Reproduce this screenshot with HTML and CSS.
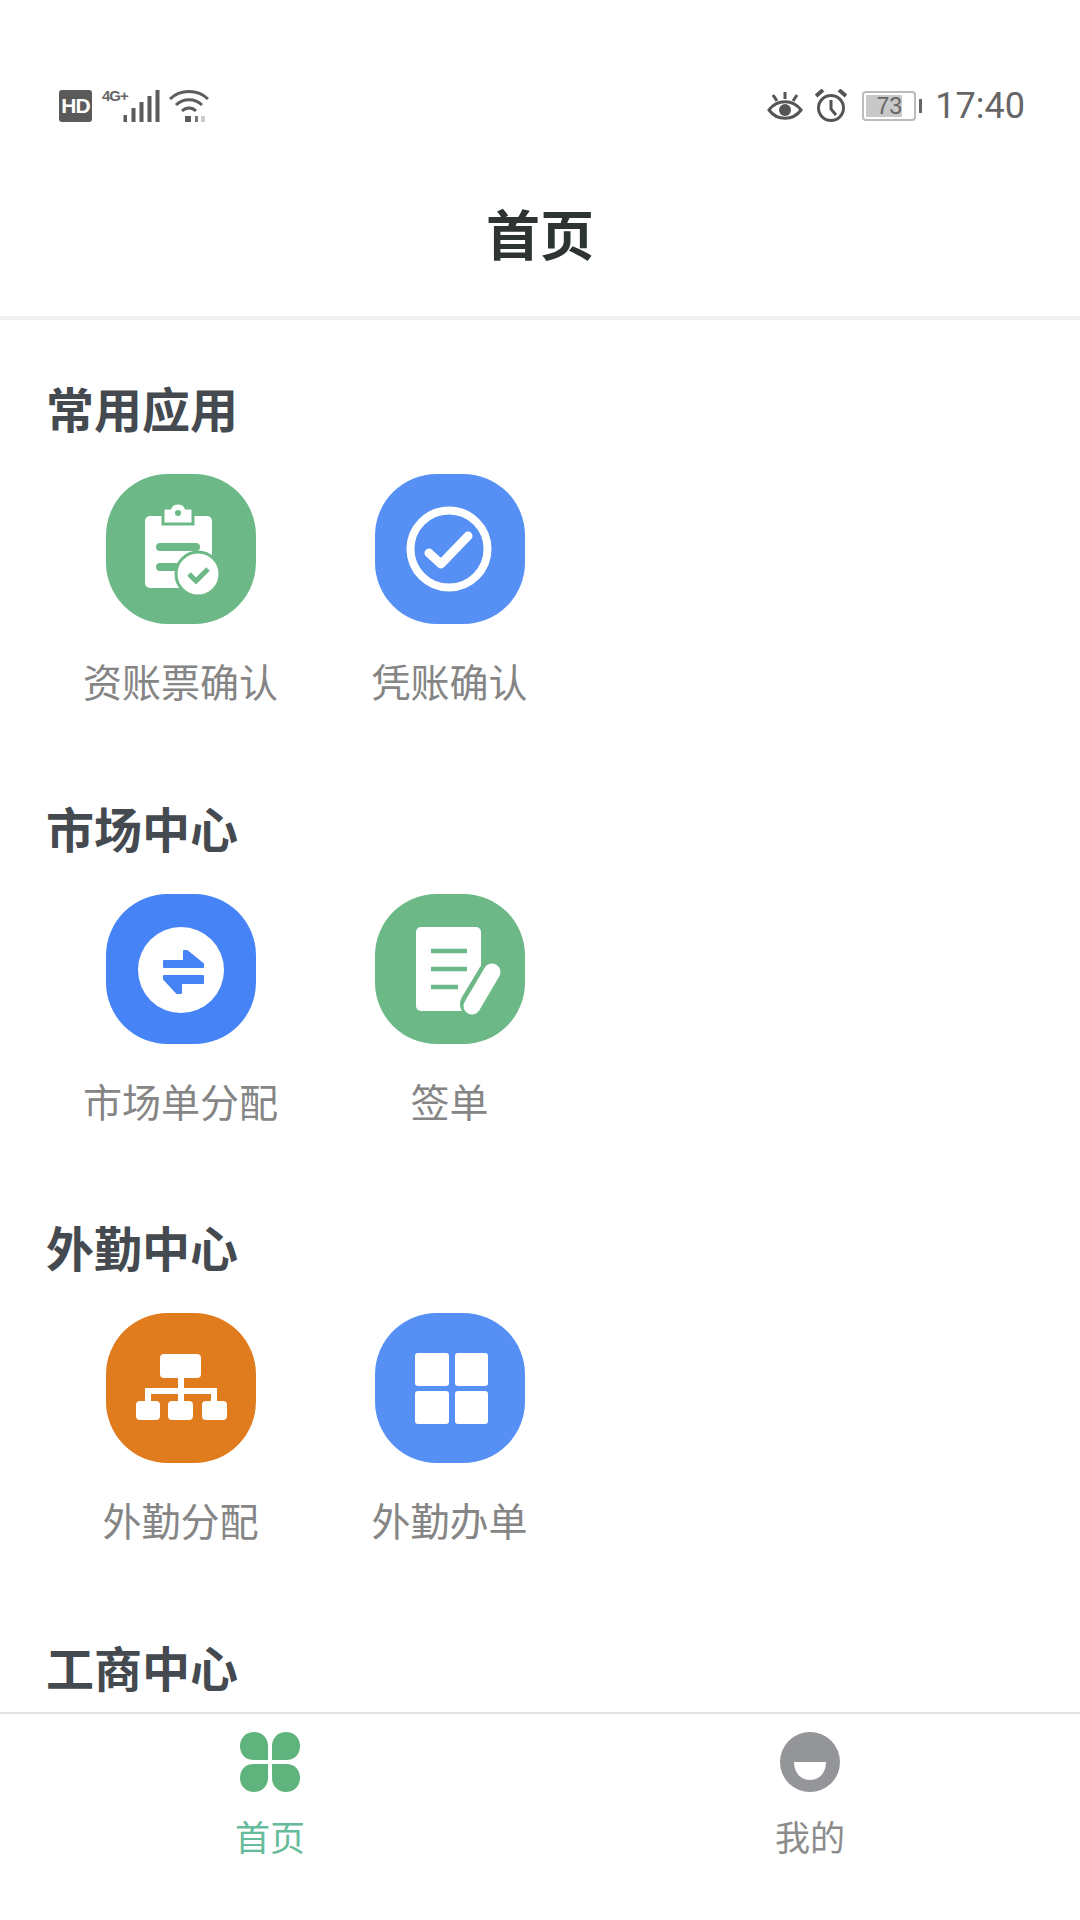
FILE: index.html
```html
<!DOCTYPE html>
<html lang="zh-CN">

<head>
    <meta charset="UTF-8" />
    <title>首页</title>
    <link rel="stylesheet" href="styles.css">
</head>

<body>

    <div class="app">

        <!-- Status bar -->
        <div class="status-bar">
            <div class="status-left">
                <span class="hd-badge">HD</span>
                <span class="net-type">4G+</span>
                <svg class="signal-icon" viewBox="0 0 36 32">
                    <rect x="0" y="25" width="3.5" height="7" />
                    <rect x="8" y="18" width="4" height="14" />
                    <rect x="16" y="12" width="4" height="20" />
                    <rect x="24" y="6" width="4" height="26" />
                    <rect x="32" y="0" width="4" height="32" />
                </svg>
                <svg class="wifi-icon" viewBox="0 0 40 32">
                    <g fill="none" stroke="#5c5c5c" stroke-width="3">
                        <path d="M1 9 C11 -1 29 -1 39 9" />
                        <path d="M7 15 C14 8 26 8 33 15" />
                        <path d="M13 21 C17 17 23 17 27 21" />
                    </g>
                    <rect x="16" y="26" width="6" height="6" fill="#5c5c5c" />
                    <rect x="26" y="26" width="3" height="6" fill="#777" />
                    <rect x="32" y="26" width="4" height="6" fill="#ccc" />
                </svg>
            </div>
            <div class="status-right">
                <svg class="eye-icon" viewBox="0 0 36 32">
                    <g fill="none" stroke="#555" stroke-width="3">
                        <path d="M2 20 C10 9 26 9 34 20 C26 31 10 31 2 20 Z" />
                        <path d="M18 2 V9 M6 5 L10 11 M30 5 L26 11" />
                    </g>
                    <circle cx="18" cy="20" r="6" fill="#555" />
                </svg>
                <svg class="alarm-icon" viewBox="0 0 32 34">
                    <g fill="none" stroke="#555" stroke-width="3">
                        <circle cx="16" cy="19" r="12.5" />
                        <path d="M16 11 V20 L21 26" />
                        <path d="M1 7 L8 1 M31 7 L24 1" stroke-width="4" />
                    </g>
                </svg>
                <div class="battery">
                    <div class="battery-body">
                        <div class="battery-level"></div>
                        <span class="battery-text">73</span>
                    </div>
                    <div class="battery-nub"></div>
                </div>
                <span class="status-time">17:40</span>
            </div>
        </div>

        <!-- Title -->
        <div class="page-header">首页</div>

        <!-- App groups -->
        <div class="content">

            <div class="group">
                <h2 class="group-title">常用应用</h2>
                <div class="app-row">
                    <div class="app-item">
                        <svg class="app-icon icon-green" viewBox="0 0 150 150">
                            <rect x="39" y="42" width="67" height="72" rx="5" fill="#fff" />
                            <path d="M57 36 Q57 34 60 34 H64 Q66 29 72 29 Q78 29 80 34 H84 Q87 34 87 36 V50 H57 Z" fill="#fff" stroke="#6cb886" stroke-width="3" />
                            <circle cx="72" cy="39" r="3" fill="#6cb886" />
                            <path d="M54 73 H90 M54 93 H84" stroke="#6cb886" stroke-width="8" stroke-linecap="round" />
                            <circle cx="92" cy="100" r="22" fill="#fff" stroke="#6cb886" stroke-width="3" />
                            <path d="M83 100 L90 107 L102 95" fill="none" stroke="#6cb886" stroke-width="5" />
                        </svg>
                        <span class="app-label">资账票确认</span>
                    </div>
                    <div class="app-item">
                        <svg class="app-icon icon-blue" viewBox="0 0 150 150">
                            <circle cx="74" cy="75" r="38.5" fill="none" stroke="#fff" stroke-width="8" />
                            <path d="M54 79 L66 90 L93 62" fill="none" stroke="#fff" stroke-width="9" stroke-linecap="round" stroke-linejoin="round" />
                        </svg>
                        <span class="app-label">凭账确认</span>
                    </div>
                </div>
            </div>

            <div class="group">
                <h2 class="group-title">市场中心</h2>
                <div class="app-row">
                    <div class="app-item">
                        <svg class="app-icon icon-blue-dark" viewBox="0 0 150 150">
                            <circle cx="75" cy="76" r="43" fill="#fff" />
                            <path d="M58 67 H78 V57 H81 L97 70 V73 H58 Z M97 82 H58 V85 L71 99 H75 V89 H97 Z" fill="#4583f7" stroke="#4583f7" stroke-width="2" stroke-linejoin="round" />
                        </svg>
                        <span class="app-label">市场单分配</span>
                    </div>
                    <div class="app-item">
                        <svg class="app-icon icon-green" viewBox="0 0 150 150">
                            <rect x="41" y="33" width="65" height="84" rx="5" fill="#fff" />
                            <path d="M56 57 H92 M56 75 H92 M56 93 H83" stroke="#6cb886" stroke-width="4.5" />
                            <path d="M116 80 L98 110" stroke="#6cb886" stroke-width="26" stroke-linecap="round" />
                            <path d="M117 78 L97 112" stroke="#fff" stroke-width="17" stroke-linecap="round" />
                        </svg>
                        <span class="app-label">签单</span>
                    </div>
                </div>
            </div>

            <div class="group">
                <h2 class="group-title">外勤中心</h2>
                <div class="app-row">
                    <div class="app-item">
                        <svg class="app-icon icon-orange" viewBox="0 0 150 150">
                            <g fill="#fff">
                                <rect x="54" y="41" width="41" height="24" rx="4" />
                                <rect x="72" y="65" width="6" height="24" />
                                <rect x="39" y="75" width="72" height="6" />
                                <rect x="39" y="75" width="6" height="14" />
                                <rect x="105" y="75" width="6" height="14" />
                                <rect x="30" y="88" width="24" height="19" rx="4" />
                                <rect x="62" y="88" width="25" height="19" rx="4" />
                                <rect x="96" y="88" width="25" height="19" rx="4" />
                            </g>
                        </svg>
                        <span class="app-label">外勤分配</span>
                    </div>
                    <div class="app-item">
                        <svg class="app-icon icon-blue" viewBox="0 0 150 150">
                            <g fill="#fff">
                                <rect x="40" y="40" width="34" height="33" rx="3" />
                                <rect x="80" y="40" width="33" height="33" rx="3" />
                                <rect x="40" y="78" width="34" height="33" rx="3" />
                                <rect x="80" y="78" width="33" height="33" rx="3" />
                            </g>
                        </svg>
                        <span class="app-label">外勤办单</span>
                    </div>
                </div>
            </div>

            <div class="group">
                <h2 class="group-title">工商中心</h2>
            </div>

        </div>

        <!-- Bottom tabs -->
        <div class="tab-bar">
            <div class="tab tab-active">
                <svg class="tab-icon" viewBox="0 0 60 60">
                    <g fill="#5fb37c">
                        <path id="leaf" d="M28 28 H14 C5 28 0 22 0 14 C0 6 6 0 14 0 C22 0 28 6 28 14 Z" />
                        <use href="#leaf" transform="translate(60 0) scale(-1 1)" />
                        <use href="#leaf" transform="translate(0 60) scale(1 -1)" />
                        <use href="#leaf" transform="translate(60 60) scale(-1 -1)" />
                    </g>
                </svg>
                <span class="tab-label">首页</span>
            </div>
            <div class="tab">
                <svg class="tab-icon" viewBox="0 0 60 60">
                    <circle cx="30" cy="30" r="30" fill="#939598" />
                    <path d="M14 30 H46 C46 41 39 48 30 48 C21 48 14 41 14 30 Z" fill="#fff" />
                </svg>
                <span class="tab-label">我的</span>
            </div>
        </div>

    </div>

</body>

</html>
```

FILE: styles.css
```css
body {
    margin: 0;
    background-color: #fff;
    font-family: "Noto Sans CJK SC", "Noto Sans", sans-serif;
}

.app {
    display: flex;
    flex-direction: column;
    height: 1920px;
    overflow: hidden;
}

/* Status bar */
.status-bar {
    display: flex;
    justify-content: space-between;
    align-items: center;
    height: 32px;
    padding: 90px 55px 28px 59px;
    flex-shrink: 0;
}

.status-left,
.status-right {
    display: flex;
    align-items: center;
}

.hd-badge {
    width: 33px;
    height: 32px;
    line-height: 32px;
    border-radius: 3px;
    background-color: #5a5a5a;
    color: #fff;
    font-family: "Liberation Sans", sans-serif;
    font-size: 21px;
    font-weight: 700;
    letter-spacing: -1px;
    text-align: center;
}

.net-type {
    align-self: flex-start;
    width: 26px;
    margin-left: 10px;
    margin-top: -4px;
    color: #666;
    font-family: "Liberation Sans", sans-serif;
    font-size: 15px;
    font-weight: 700;
    letter-spacing: -1px;
    line-height: 20px;
}

.signal-icon {
    width: 37px;
    height: 32px;
    margin-left: -5px;
    fill: #5c5c5c;
}

.wifi-icon {
    width: 40px;
    height: 32px;
    margin-left: 9px;
}

.eye-icon {
    width: 36px;
    height: 32px;
}

.alarm-icon {
    width: 32px;
    height: 34px;
    margin-left: 12px;
}

/* Battery */
.battery {
    display: flex;
    align-items: center;
    margin-left: 15px;
}

.battery-body {
    position: relative;
    width: 50px;
    height: 26px;
    border: 2px solid #bbb;
    border-radius: 4px;
    text-align: center;
}

.battery-level {
    position: absolute;
    left: 2px;
    top: 2px;
    bottom: 2px;
    width: 36px;
    background-color: #c8c8c8;
}

.battery-text {
    position: relative;
    color: #666;
    font-family: "Liberation Sans", sans-serif;
    font-size: 23px;
    line-height: 26px;
}

.battery-nub {
    width: 3px;
    height: 14px;
    margin-left: 3px;
    background-color: #666;
}

.status-time {
    margin-left: 13px;
    color: #666;
    font-family: Roboto, sans-serif;
    font-size: 36px;
    line-height: 40px;
}

/* Title */
.page-header {
    height: 166px;
    line-height: 166px;
    flex-shrink: 0;
    border-bottom: 4px solid #f0f0f0;
    color: #2d3432;
    font-size: 54px;
    font-weight: 700;
    text-align: center;
}

/* App groups */
.content {
    flex: 1;
    overflow: hidden;
    padding-top: 57px;
}

.group {
    margin-bottom: 91.5px;
}

.group-title {
    margin: 0 0 37px 46px;
    color: #444a50;
    font-size: 48px;
    font-weight: 700;
    line-height: 60px;
}

.app-row {
    display: flex;
    padding-left: 46px;
}

.app-item {
    display: flex;
    flex-direction: column;
    align-items: center;
    width: 269px;
}

.app-icon {
    width: 150px;
    height: 150px;
    border-radius: 41%;
}

.icon-green {
    background-color: #6cb886;
}

.icon-blue {
    background-color: #5790f5;
}

.icon-blue-dark {
    background-color: #4583f7;
}

.icon-orange {
    background-color: #e07b1e;
}

.app-label {
    margin-top: 31px;
    color: #858585;
    font-size: 39px;
    line-height: 50px;
}

/* Bottom tabs */
.tab-bar {
    display: flex;
    height: 188px;
    padding-top: 18px;
    flex-shrink: 0;
    border-top: 2px solid #e2e2e4;
    background-color: #fff;
}

.tab {
    flex: 1;
    display: flex;
    flex-direction: column;
    align-items: center;
}

.tab-icon {
    width: 60px;
    height: 60px;
}

.tab-label {
    margin-top: 21px;
    color: #8c8c8c;
    font-size: 35px;
    line-height: 46px;
}

.tab-active .tab-label {
    color: #66bb9a;
}
```
